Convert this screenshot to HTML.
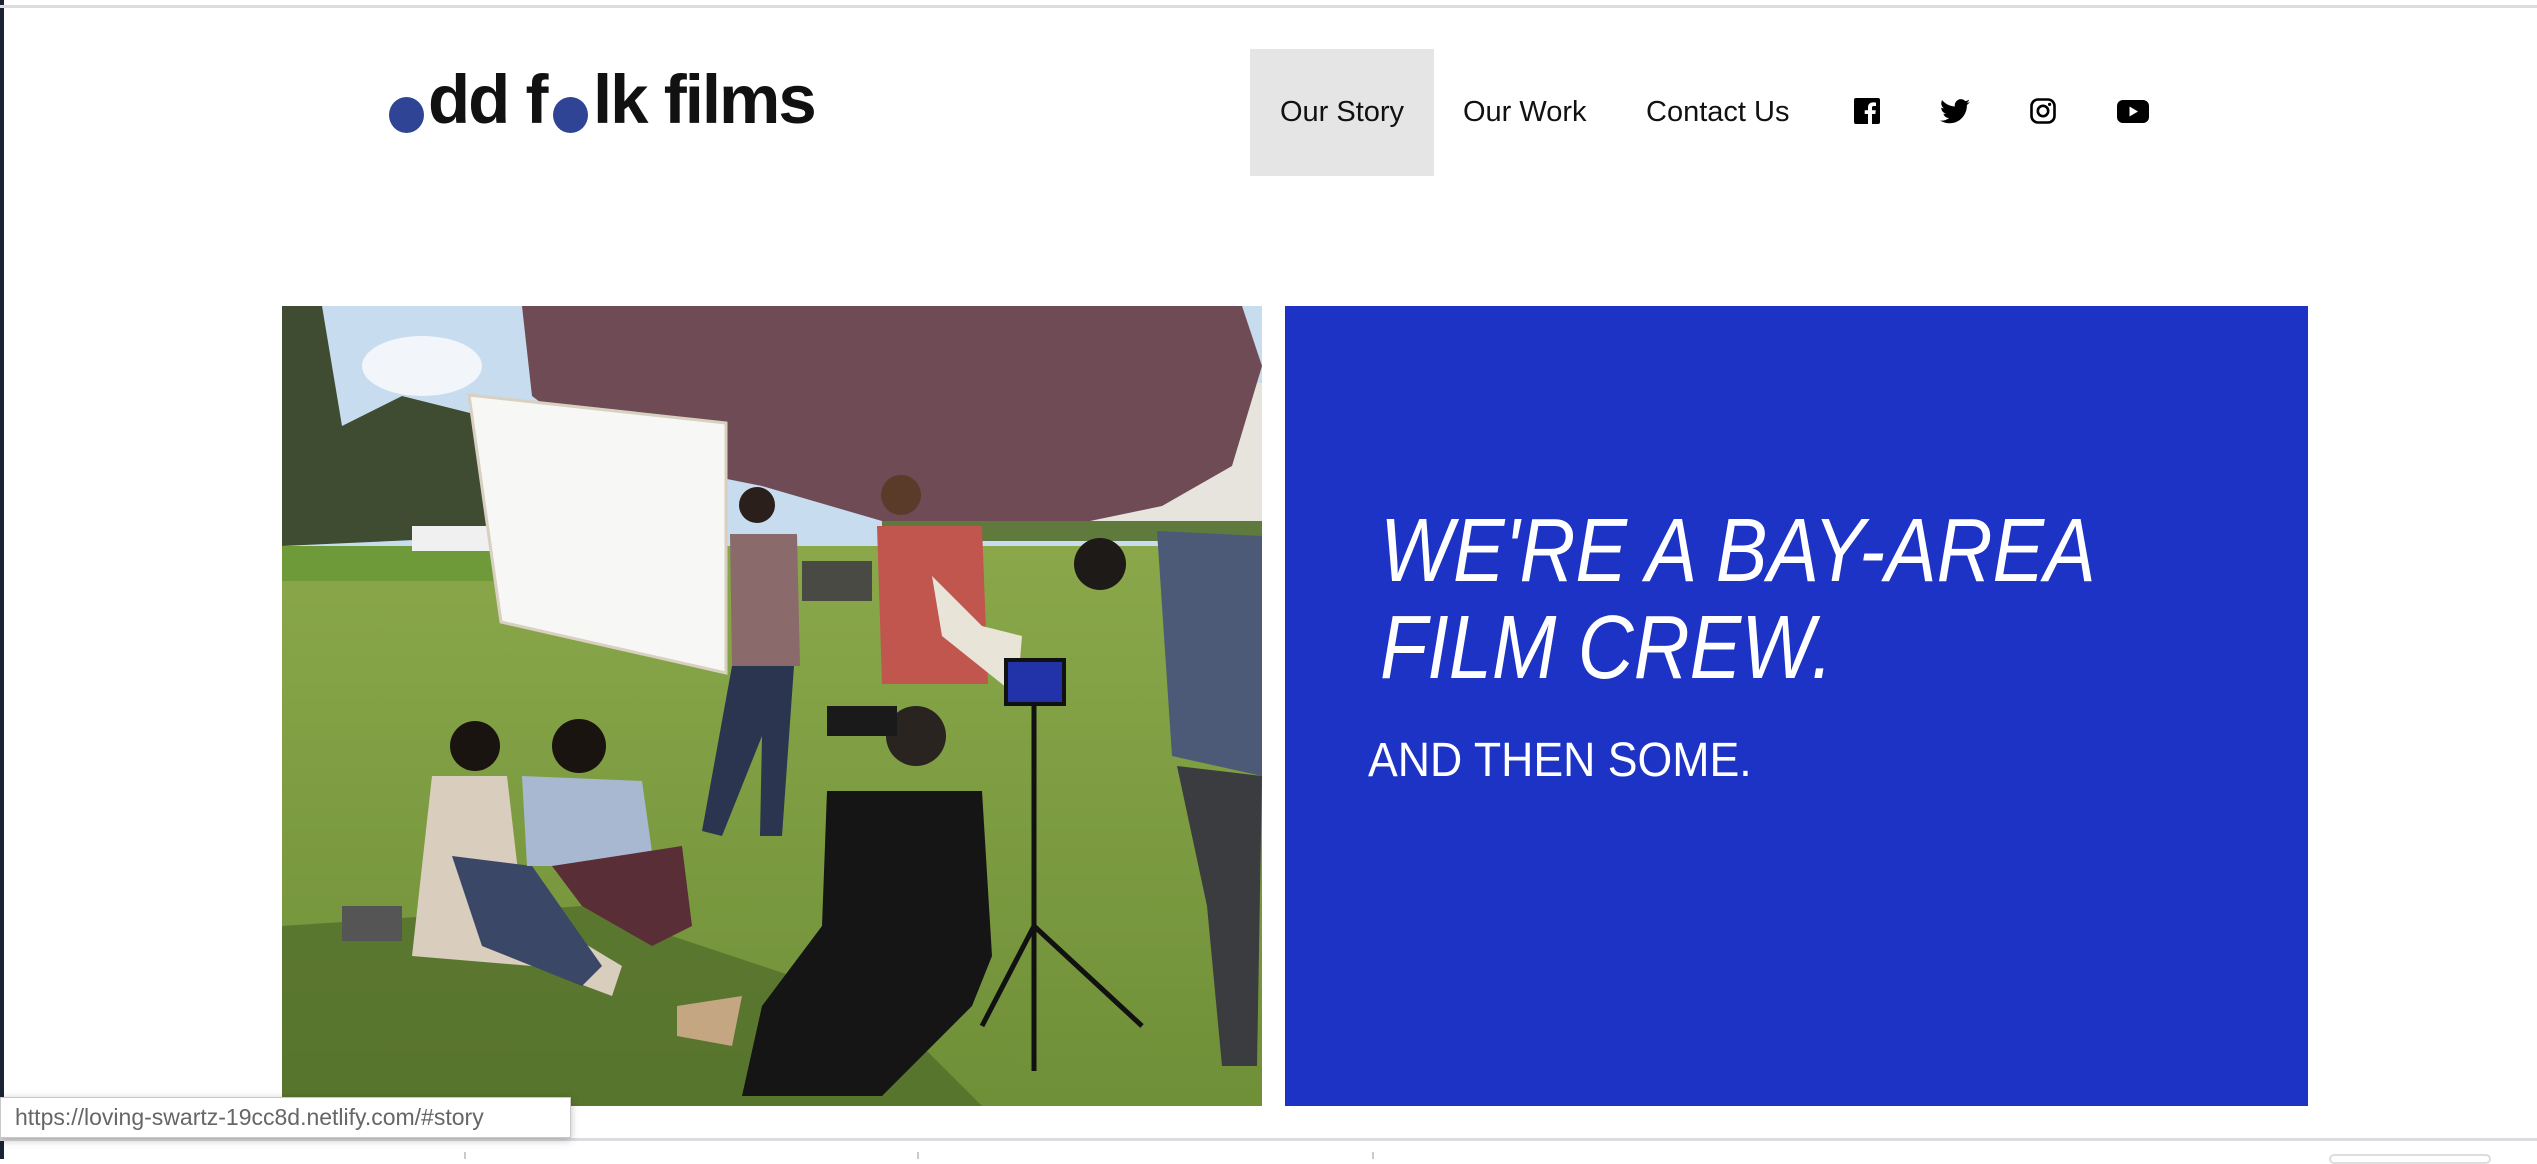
<!DOCTYPE html>
<html><head><meta charset="utf-8">
<style>
*{margin:0;padding:0;box-sizing:border-box}
html,body{width:2537px;height:1159px;overflow:hidden;background:#fff;font-family:"Liberation Sans",sans-serif}
.abs{position:absolute}
.topline{left:0;top:5px;width:2537px;height:3px;background:#dcdce0}
.leftstrip{left:0;top:0;width:4px;height:1159px;background:#1b2234}
.logo{left:388px;top:60px;height:90px;font-weight:bold;font-size:69px;letter-spacing:-2px;color:#111;white-space:nowrap}
.dot{position:absolute;width:35px;height:36px;border-radius:50%;background:#2f4494}
.nav a{position:absolute;top:49px;height:127px;line-height:127px;font-size:29px;color:#111;text-decoration:none;white-space:nowrap}
.active{background:#e5e5e5}
.blue{left:1285px;top:306px;width:1023px;height:800px;background:#1c33c6}
.h1{color:#fff;font-style:italic;font-size:90px;line-height:97px;white-space:nowrap;transform:scaleX(0.86);transform-origin:left top}
.h2{color:#fff;font-size:48px;white-space:nowrap;transform:scaleX(0.93);transform-origin:left top;font-weight:300}
.tip{left:0;top:1097px;width:571px;height:41px;background:#fff;border:1px solid #c8c8c8;box-shadow:0 2px 8px rgba(0,0,0,.25);font-size:23px;color:#666;line-height:39px;padding-left:14px;white-space:nowrap}
.botline{left:0;top:1138px;width:2537px;height:3px;background:#dcdce0}
.div{top:1152px;width:2px;height:7px;background:#ccc}
</style></head><body>
<div class="abs leftstrip"></div>
<div class="abs topline"></div>

<div class="abs logo">
  <span class="dot" style="left:1px;top:37px"></span>
  <span class="abs" style="left:40px;top:0">dd f</span>
  <span class="dot" style="left:165px;top:37px"></span>
  <span class="abs" style="left:205px;top:0">lk films</span>
</div>

<div class="nav">
  <a class="active" style="left:1250px;width:184px;text-align:center">Our Story</a>
  <a style="left:1463px">Our Work</a>
  <a style="left:1646px">Contact Us</a>
</div>
<svg class="abs" style="left:1854px;top:98px" width="26" height="26" viewBox="0 0 26 26"><rect width="26" height="26" rx="2" fill="#000"/><path d="M18 26V16h3.3l.5-3.8H18V9.8c0-1.1.3-1.8 1.9-1.8H22V4.6c-.4 0-1.6-.2-3-.2-3 0-5 1.8-5 5.1v2.7h-3.3V16H14v10z" fill="#fff"/></svg>
<svg class="abs" style="left:1940px;top:99px" width="30" height="25" viewBox="0 0 24 20"><path d="M24 2.4c-.9.4-1.8.6-2.8.8 1-.6 1.8-1.6 2.2-2.7-1 .6-2 1-3.1 1.2A4.9 4.9 0 0 0 11.9 6C7.8 5.8 4.2 3.9 1.7.9a4.9 4.9 0 0 0 1.5 6.6c-.8 0-1.6-.3-2.2-.6 0 2.4 1.7 4.4 3.900 4.8-.7.2-1.5.2-2.2.1.6 2 2.4 3.4 4.6 3.4A9.9 9.9 0 0 1 0 17.2 14 14 0 0 0 7.5 19.4c9.1 0 14-7.5 14-14v-.6c1-.7 1.8-1.6 2.5-2.4z" fill="#000"/></svg>
<svg class="abs" style="left:2030px;top:98px" width="26" height="26" viewBox="0 0 26 26"><rect x="1.5" y="1.5" width="23" height="23" rx="6.5" fill="none" stroke="#000" stroke-width="2.6"/><circle cx="13" cy="13" r="5.2" fill="none" stroke="#000" stroke-width="2.6"/><circle cx="19.6" cy="6.4" r="1.6" fill="#000"/></svg>
<svg class="abs" style="left:2117px;top:100px" width="32" height="23" viewBox="0 0 32 23"><rect width="32" height="23" rx="6" fill="#000"/><path d="M12.5 6.5v10l8.5-5z" fill="#fff"/></svg>

<svg class="abs" style="left:282px;top:306px" width="980" height="800" viewBox="0 0 980 800" preserveAspectRatio="none">
  <defs><linearGradient id="g" x1="0" y1="0" x2="0" y2="1"><stop offset="0" stop-color="#8aa84a"/><stop offset="1" stop-color="#6f8f38"/></linearGradient></defs>
  <rect width="980" height="800" fill="#c8dcef"/>
  <ellipse cx="140" cy="60" rx="60" ry="30" fill="#f2f5fa"/>
  <rect x="650" y="77" width="330" height="150" fill="#e6e4dc"/>
  <path d="M0 0 L40 0 L60 120 L120 90 L200 110 L220 230 L0 240Z" fill="#3f4c32"/>
  <path d="M240 0 L960 0 L980 60 L950 160 L880 200 L760 225 L600 215 L480 180 L330 150 L250 90Z" fill="#6e4b55"/>
  <rect x="600" y="215" width="380" height="20" fill="#5f7a3c"/>
  <rect x="0" y="240" width="980" height="560" fill="url(#g)"/>
  <rect x="0" y="240" width="220" height="35" fill="#6e9a3a"/>
  <rect x="130" y="220" width="80" height="25" fill="#f0f0f0"/>
  <path d="M0 620 L300 600 L420 640 L600 700 L700 800 L0 800Z" fill="#4f6a2a" opacity=".7"/>
  <path d="M187 89 L444 117 L444 367 L219 316Z" fill="#f7f7f5" stroke="#d8d0c0" stroke-width="3"/>
  <rect x="520" y="255" width="70" height="40" fill="#4a4a44"/>
  <circle cx="475" cy="199" r="18" fill="#2a1f1a"/>
  <path d="M448 228 L515 228 L518 360 L450 360Z" fill="#8a6a6a"/>
  <path d="M450 360 L512 360 L500 530 L478 530 L480 430 L440 530 L420 525Z" fill="#2c3550"/>
  <circle cx="619" cy="189" r="20" fill="#5a3a28"/>
  <path d="M595 220 L700 220 L706 378 L600 378Z" fill="#c0564e"/>
  <circle cx="818" cy="258" r="26" fill="#1e1a18"/>
  <path d="M875 225 L980 230 L980 470 L890 450Z" fill="#4c5a78"/>
  <path d="M895 460 L980 470 L975 760 L940 760 L925 600Z" fill="#3a3c40"/>
  <path d="M650 270 L700 320 L740 330 L735 390 L660 330Z" fill="#e8e4d8"/>
  <rect x="724" y="354" width="58" height="44" fill="#2233aa" stroke="#111" stroke-width="4"/>
  <path d="M752 400 L752 765 M752 620 L700 720 M752 620 L860 720" stroke="#111" stroke-width="5"/>
  <circle cx="634" cy="430" r="30" fill="#2a2420"/>
  <rect x="545" y="400" width="70" height="30" fill="#1a1a1a"/>
  <path d="M545 485 L700 485 L710 650 L690 700 L600 790 L460 790 L480 700 L540 620Z" fill="#151515"/>
  <path d="M395 700 L460 690 L450 740 L395 730Z" fill="#c4a682"/>
  <circle cx="193" cy="440" r="25" fill="#1a1410"/>
  <path d="M150 470 L225 470 L240 600 L340 660 L330 690 L250 660 L130 650Z" fill="#d9cdbd"/>
  <path d="M170 550 L250 560 L320 660 L300 680 L200 640Z" fill="#3a4766"/>
  <circle cx="297" cy="440" r="27" fill="#1a1410"/>
  <path d="M240 470 L360 475 L372 560 L245 560Z" fill="#a8b8d0"/>
  <path d="M270 560 L400 540 L410 620 L370 640 L300 600Z" fill="#5a2e36"/>
  <rect x="60" y="600" width="60" height="35" fill="#555"/>
</svg>

<div class="abs blue"></div>
<div class="abs h1" style="left:1380px;top:503px">WE'RE A BAY-AREA<br>FILM CREW.</div>
<div class="abs h2" style="left:1368px;top:733px">AND THEN SOME.</div>

<div class="abs botline"></div>
<div class="abs div" style="left:464px"></div>
<div class="abs div" style="left:917px"></div>
<div class="abs div" style="left:1372px"></div>
<div class="abs" style="left:2329px;top:1154px;width:162px;height:10px;border:2px solid #ddd;border-radius:8px"></div>
<div class="abs tip">https://loving-swartz-19cc8d.netlify.com/#story</div>
</body></html>
